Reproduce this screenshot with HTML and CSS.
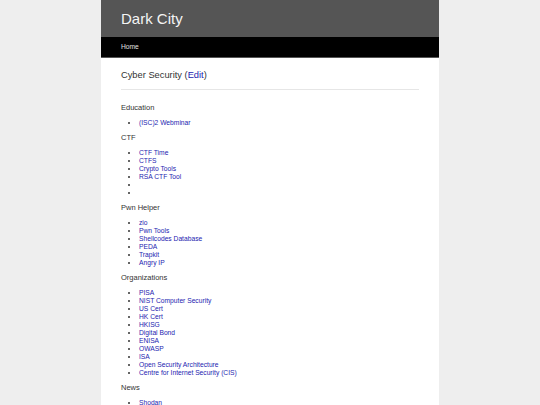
FILE: index.html
```html
<!DOCTYPE html>
<html lang="en">
<head>
<meta charset="utf-8">
<title>Dark City</title>
<link rel="stylesheet" href="styles.css">
</head>
<body>
<div class="page">
  <header class="site-header">
    <h1 class="site-title">Dark City</h1>
  </header>
  <nav class="site-nav">
    <a href="#" class="nav-link">Home</a>
  </nav>
  <main class="content">
    <h2 class="page-title">Cyber Security (<a href="#">Edit</a>)</h2>
    <hr class="divider">

    <h3 class="section">Education</h3>
    <ul class="links">
      <li><a href="#">(ISC)2 Webminar</a></li>
    </ul>

    <h3 class="section">CTF</h3>
    <ul class="links">
      <li><a href="#">CTF Time</a></li>
      <li><a href="#">CTFS</a></li>
      <li><a href="#">Crypto Tools</a></li>
      <li><a href="#">RSA CTF Tool</a></li>
      <li>&nbsp;</li>
      <li>&nbsp;</li>
    </ul>

    <h3 class="section">Pwn Helper</h3>
    <ul class="links">
      <li><a href="#">zio</a></li>
      <li><a href="#">Pwn Tools</a></li>
      <li><a href="#">Shellcodes Database</a></li>
      <li><a href="#">PEDA</a></li>
      <li><a href="#">Trapkit</a></li>
      <li><a href="#">Angry IP</a></li>
    </ul>

    <h3 class="section">Organizations</h3>
    <ul class="links">
      <li><a href="#">PISA</a></li>
      <li><a href="#">NIST Computer Security</a></li>
      <li><a href="#">US Cert</a></li>
      <li><a href="#">HK Cert</a></li>
      <li><a href="#">HKISG</a></li>
      <li><a href="#">Digital Bond</a></li>
      <li><a href="#">ENISA</a></li>
      <li><a href="#">OWASP</a></li>
      <li><a href="#">ISA</a></li>
      <li><a href="#">Open Security Architecture</a></li>
      <li><a href="#">Centre for Internet Security (CIS)</a></li>
    </ul>

    <h3 class="section">News</h3>
    <ul class="links">
      <li><a href="#">Shodan</a></li>
    </ul>
  </main>
</div>
</body>
</html>
```

FILE: styles.css
```css
html, body {
  margin: 0;
  padding: 0;
}

body {
  background: #eeeeee;
  font-family: "Liberation Sans", Arial, sans-serif;
  color: #333333;
}

.page {
  width: 338px;
  margin: 0 auto;
  background: #ffffff;
  min-height: 100vh;
}

.site-header {
  background: #555555;
  padding: 10px 20px;
}

.site-title {
  margin: 0;
  font-size: 15px;
  line-height: 17px;
  font-weight: normal;
  color: #f4f4f4;
}

.site-nav {
  background: #000000;
  padding: 6px 20px;
  font-size: 6.7px;
  line-height: 8px;
  border-bottom: 1px solid #555555;
}

.nav-link {
  color: #e0e0e0;
  text-decoration: none;
}

.content {
  padding: 12px 20px 20px;
}

.page-title {
  margin: 0;
  font-size: 9.3px;
  line-height: 11px;
  font-weight: normal;
  color: #333333;
}

.page-title a {
  color: #2323b0;
  text-decoration: none;
}

.divider {
  border: 0;
  border-top: 1px solid #e6e6e6;
  height: 0;
  margin: 8px 0 13px;
}

.section {
  margin: 0;
  font-size: 7.5px;
  line-height: 9px;
  font-weight: normal;
  color: #333333;
}

.links {
  margin: 6.5px 0;
  padding-left: 18px;
  font-size: 6.7px;
  line-height: 8px;
  color: #333333;
}

.links a {
  color: #2323b0;
  text-decoration: none;
}
```
